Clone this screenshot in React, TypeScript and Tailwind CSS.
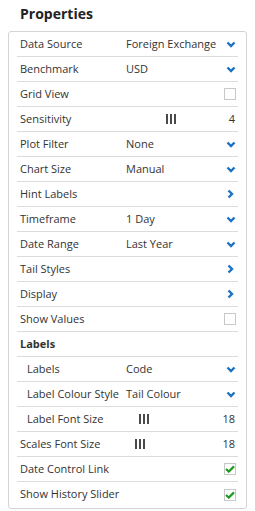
import React from 'react';

type Kind = 'select' | 'nav' | 'check' | 'slider' | 'header';

interface Row {
    label: string;
    kind: Kind;
    value?: string;
    checked?: boolean;
    indent?: boolean;
    thumb?: string;
}

const rows: Row[] = [
    { label: 'Data Source', kind: 'select', value: 'Foreign Exchange' },
    { label: 'Benchmark', kind: 'select', value: 'USD' },
    { label: 'Grid View', kind: 'check', checked: false },
    { label: 'Sensitivity', kind: 'slider', value: '4', thumb: 'pl-[40px]' },
    { label: 'Plot Filter', kind: 'select', value: 'None' },
    { label: 'Chart Size', kind: 'select', value: 'Manual' },
    { label: 'Hint Labels', kind: 'nav' },
    { label: 'Timeframe', kind: 'select', value: '1 Day' },
    { label: 'Date Range', kind: 'select', value: 'Last Year' },
    { label: 'Tail Styles', kind: 'nav' },
    { label: 'Display', kind: 'nav' },
    { label: 'Show Values', kind: 'check', checked: false },
    { label: 'Labels', kind: 'header' },
    { label: 'Labels', kind: 'select', value: 'Code', indent: true },
    { label: 'Label Colour Style', kind: 'select', value: 'Tail Colour', indent: true },
    { label: 'Label Font Size', kind: 'slider', value: '18', indent: true, thumb: 'pl-[13px]' },
    { label: 'Scales Font Size', kind: 'slider', value: '18', thumb: 'pl-[9px]' },
    { label: 'Date Control Link', kind: 'check', checked: true },
    { label: 'Show History Slider', kind: 'check', checked: true },
];

const ChevronDown = () => (
    <svg width="10" height="7" viewBox="0 0 10 7" className="shrink-0">
        <polyline points="1.5,1.5 5,5 8.5,1.5" fill="none" stroke="#1a72c4" strokeWidth="2.4" />
    </svg>
);

const ChevronRight = () => (
    <svg width="7" height="10" viewBox="0 0 7 10" className="shrink-0">
        <polyline points="1.5,1.5 5,5 1.5,8.5" fill="none" stroke="#1a72c4" strokeWidth="2.4" />
    </svg>
);

const Checkbox = ({ checked }: { checked?: boolean }) => (
    <div className="w-[12px] h-[12px] border border-[#c8c8c8] bg-white flex items-center justify-center">
        {checked && (
            <svg width="10" height="8" viewBox="0 0 10 8">
                <polyline points="1,4 3.8,6.6 9,1.4" fill="none" stroke="#1f9a1f" strokeWidth="2.2" />
            </svg>
        )}
    </div>
);

const Thumb = () => (
    <div className="flex gap-[2px] h-[10px]">
        <div className="w-[2px] bg-[#4a4a4a]" />
        <div className="w-[2px] bg-[#4a4a4a]" />
        <div className="w-[2px] bg-[#4a4a4a]" />
    </div>
);

const PropertyRow = ({ row, last }: { row: Row; last: boolean }) => {
    const pad = row.indent ? 'pl-[10px]' : 'pl-[3px]';
    return (
        <div className={`h-[25px] flex items-center ${last ? '' : 'border-b border-[#dcdcdc]'}`}>
            <div className={`${pad} w-[109px] shrink-0 whitespace-nowrap ${row.kind === 'header' ? 'font-bold' : ''}`}>
                {row.label}
            </div>
            <div className="flex-1 flex items-center pr-[2px]">
                {row.kind === 'select' && (
                    <>
                        <span className="flex-1 whitespace-nowrap">{row.value}</span>
                        <ChevronDown />
                    </>
                )}
                {row.kind === 'nav' && (
                    <>
                        <span className="flex-1" />
                        <div className="pr-[2px]"><ChevronRight /></div>
                    </>
                )}
                {row.kind === 'check' && (
                    <>
                        <span className="flex-1" />
                        <Checkbox checked={row.checked} />
                    </>
                )}
                {row.kind === 'slider' && (
                    <>
                        <div className={`flex-1 ${row.thumb}`}><Thumb /></div>
                        <span className="pr-[1px]">{row.value}</span>
                    </>
                )}
            </div>
        </div>
    );
};

export default function App() {
    return (
        <div className="w-[255px] h-[511px] bg-white text-[#333] text-[11px] font-['Open_Sans',sans-serif] px-[8px]">
            <h1 className="text-[14px] font-bold text-[#222] pl-[12px] pt-[3px] h-[31px] leading-[22px]">Properties</h1>
            <div className="border border-[#d4d4d4] rounded-[3px] px-[8px] h-[478px]">
                {rows.map((r, i) => (
                    <PropertyRow key={i} row={r} last={i === rows.length - 1} />
                ))}
            </div>
        </div>
    );
}
